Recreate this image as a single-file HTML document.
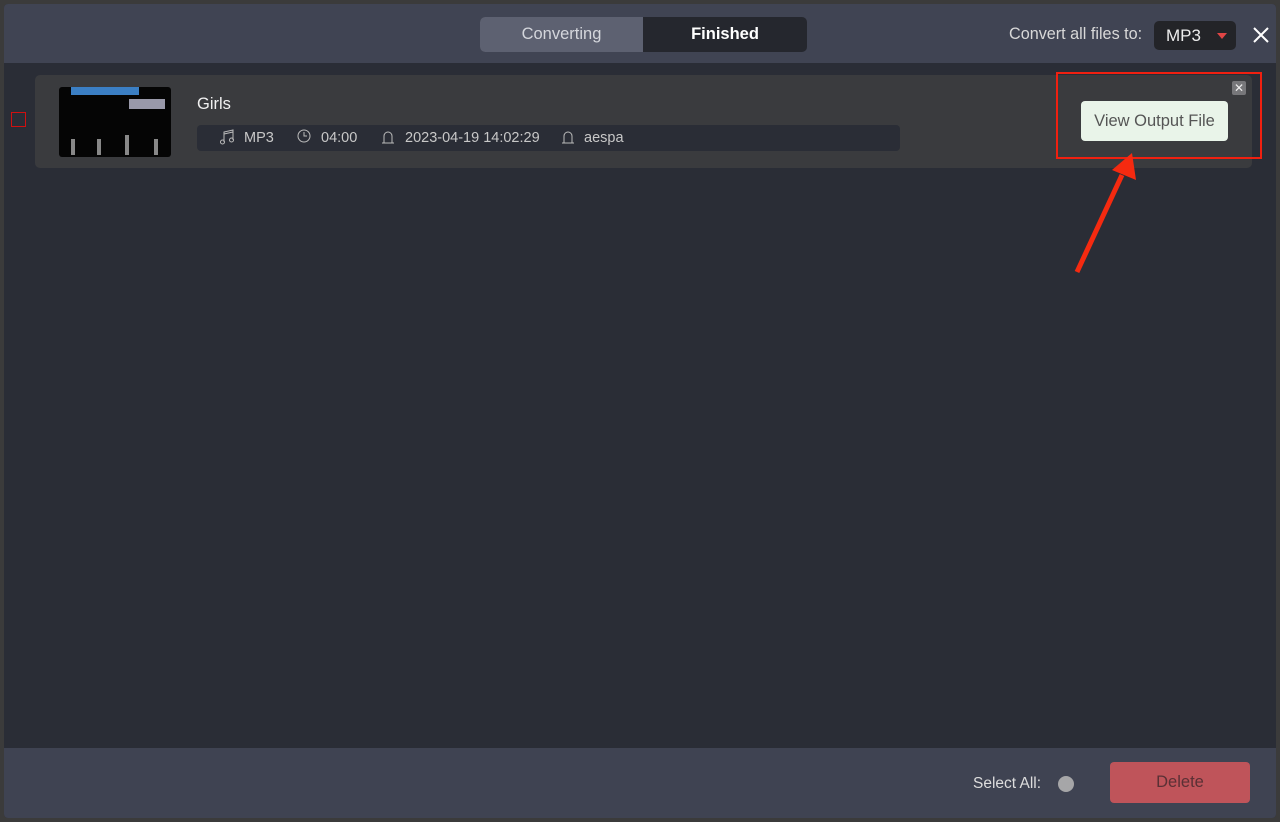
<!DOCTYPE html>
<html><head><style>
body{margin:0;width:1280px;height:822px;background:#3b3b3b;font-family:"Liberation Sans",sans-serif;overflow:hidden;position:relative}
.win{position:absolute;left:4px;top:4px;width:1272px;height:814px;background:#2a2d36;border-radius:4px;overflow:hidden}
.hdr{position:absolute;left:0;top:0;width:100%;height:59px;background:#404453}
.tabs{position:absolute;left:476px;top:13px;width:327px;height:35px;border-radius:5px;background:#25272e;overflow:hidden}
.tab{position:absolute;top:0;height:35px;line-height:35px;text-align:center;font-size:16.5px}
.foot{position:absolute;left:0;top:744px;width:100%;height:70px;background:#3f4352}
.card{position:absolute;left:31px;top:71px;width:1217px;height:93px;background:#3a3b3e;border-radius:5px}
.meta{position:absolute;left:193px;top:121px;width:703px;height:26px;background:#2a2d36;border-radius:4px;color:#c8c8c8;font-size:14.5px}
.meta span{position:absolute;top:5px}
.meta svg{position:absolute;top:4px}
</style></head><body>
<div class="win">
<div class="hdr">
 <div class="tabs"><div class="tab" style="left:0;width:163px;background:#5d6171;color:#d4d6dc">Converting</div><div class="tab" style="left:163px;width:164px;color:#fff;font-weight:bold">Finished</div></div>
 <div style="position:absolute;left:1005px;top:21px;color:#d8d8d8;font-size:16.2px">Convert all files to:</div>
 <div style="position:absolute;left:1150px;top:17px;width:82px;height:29px;background:#232428;border-radius:5px;color:#eee;font-size:17px;line-height:29px"><span style="margin-left:12px">MP3</span><span style="position:absolute;left:63px;top:12px;border-left:5px solid transparent;border-right:5px solid transparent;border-top:6px solid #e04545"></span></div>
 <svg style="position:absolute;left:1249px;top:23px" width="16" height="16"><path d="M1 1L15 15M15 1L1 15" stroke="#fff" stroke-width="2"/></svg>
</div>
<div style="position:absolute;left:7px;top:108px;width:13px;height:13px;border:1px solid #d01010"></div>
<div class="card"></div>
<div style="position:absolute;left:55px;top:83px;width:112px;height:70px;background:#050505;border-radius:3px;overflow:hidden">
 <div style="position:absolute;left:12px;top:0;width:68px;height:8px;background:#3b7fc4"></div>
 <div style="position:absolute;left:70px;top:12px;width:36px;height:10px;background:#99a"></div>
 <div style="position:absolute;left:12px;top:52px;width:4px;height:16px;background:#888"></div>
 <div style="position:absolute;left:38px;top:52px;width:4px;height:16px;background:#888"></div>
 <div style="position:absolute;left:66px;top:48px;width:4px;height:20px;background:#888"></div>
 <div style="position:absolute;left:95px;top:52px;width:4px;height:16px;background:#888"></div>
</div>
<div style="position:absolute;left:193px;top:91px;color:#f0f0f0;font-size:16.5px">Girls</div>
<div class="meta">
 <svg style="left:23px" width="14" height="16"><path d="M4 13V3l9-2v10M4 5l9-2" stroke="#bbb" fill="none"/><circle cx="2.5" cy="13" r="2" stroke="#bbb" fill="none"/><circle cx="11.5" cy="11" r="2" stroke="#bbb" fill="none"/></svg><span style="left:47px">MP3</span>
 <svg style="left:100px" width="14" height="14"><circle cx="7" cy="7" r="6" stroke="#bbb" fill="none"/><path d="M7 3v4h3" stroke="#bbb" fill="none"/></svg><span style="left:124px">04:00</span>
 <svg style="left:184px" width="14" height="16"><path d="M1 14h12M3 14V7a4 4 0 0 1 8 0v7" stroke="#bbb" fill="none"/></svg><span style="left:208px">2023-04-19 14:02:29</span>
 <svg style="left:364px" width="14" height="16"><path d="M1 14h12M3 14V7a4 4 0 0 1 8 0v7" stroke="#bbb" fill="none"/></svg><span style="left:387px">aespa</span>
</div>
<div style="position:absolute;left:1228px;top:77px;width:14px;height:14px;background:#77777a;border-radius:2px;color:#eee;font-size:12px;line-height:14px;text-align:center">✕</div>
<div style="position:absolute;left:1077px;top:97px;width:147px;height:40px;background:#e9f4e9;border-radius:4px;color:#555;font-size:16.5px;line-height:40px;text-align:center">View Output File</div>
<div style="position:absolute;left:1052px;top:68px;width:202px;height:83px;border:2px solid #f02010"></div>
<div class="foot">
 <div style="position:absolute;left:969px;top:27px;color:#ddd;font-size:15.5px">Select All:</div>
 <div style="position:absolute;left:1054px;top:28px;width:16px;height:16px;border-radius:50%;background:#a6a6a8"></div>
 <div style="position:absolute;left:1106px;top:14px;width:140px;height:41px;background:#bf545a;border-radius:4px;color:#5a3035;font-size:16.5px;line-height:41px;text-align:center">Delete</div>
</div>
</div>
<svg style="position:absolute;left:0;top:0" width="1280" height="822"><line x1="1077" y1="272" x2="1122" y2="175" stroke="#f52a10" stroke-width="5"/><polygon points="1132,153 1136,180 1112,170" fill="#f52a10"/></svg>
</body></html>
